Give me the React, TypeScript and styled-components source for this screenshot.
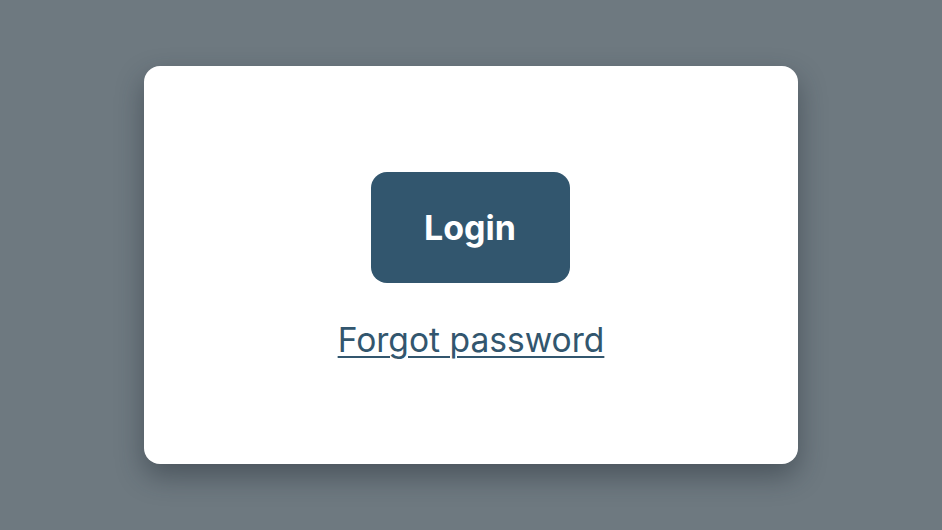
import styled, { createGlobalStyle } from "styled-components";

const GlobalStyle = createGlobalStyle`
  html, body {
    margin: 0;
    padding: 0;
    height: 100%;
  }

  body {
    background-color: #6e7980;
    font-family: Inter, "Noto Sans", sans-serif;
  }

  #root {
    height: 100%;
  }
`

const Page = styled.div`
  display: flex;
  justify-content: center;
  align-items: center;
  width: 942px;
  height: 530px;
`

const Card = styled.div`
  display: flex;
  flex-direction: column;
  align-items: center;
  justify-content: center;
  gap: 37px;
  width: 654px;
  height: 398px;
  background-color: #fff;
  border-radius: 16px;
  box-shadow: 0 12px 28px rgba(30, 40, 48, 0.45);
`

const LoginButton = styled.button`
  display: flex;
  justify-content: center;
  align-items: center;
  width: 199px;
  height: 111px;
  margin-top: 2px;
  margin-right: 2px;
  border: none;
  border-radius: 16px;
  background-color: #32566e;
  color: #fff;
  font-family: Inter, "Noto Sans", sans-serif;
  font-size: 34px;
  font-weight: 700;
  cursor: pointer;
`

const ForgotLink = styled.a`
  font-size: 33.6px;
  line-height: 40px;
  color: #32566e;
  text-decoration: underline;
  text-underline-offset: 4px;
  text-decoration-thickness: 2px;
  cursor: pointer;
`

const App = () => {
  return (
    <>
      <GlobalStyle />
      <Page>
        <Card>
          <LoginButton>Login</LoginButton>
          <ForgotLink href="#">Forgot password</ForgotLink>
        </Card>
      </Page>
    </>
  )
}

export default App;
